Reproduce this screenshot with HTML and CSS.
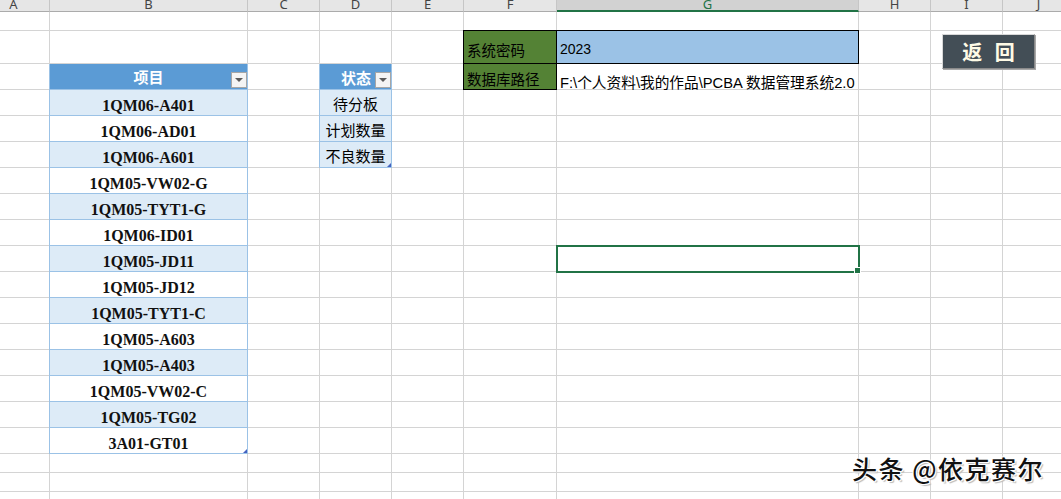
FILE: index.html
```html
<!DOCTYPE html>
<html lang="zh-CN">
<head>
    <meta charset="UTF-8">
    <title>系统设置</title>
    <link rel="stylesheet" href="styles.css">
</head>
<body>
<div class="page">
    <div class="sheet">
        <!-- column headers -->
        <div class="hd">A</div><div class="hd">B</div><div class="hd">C</div><div class="hd">D</div><div class="hd">E</div><div class="hd">F</div><div class="hd on">G</div><div class="hd">H</div><div class="hd">I</div><div class="hd">J</div>
        <!-- row 1 -->
        <div></div><div></div><div></div><div></div><div></div><div></div><div></div><div></div><div></div><div></div>
        <!-- row 2 -->
        <div></div><div></div><div></div><div></div><div></div><div class="lbl first">系统密码</div><div class="pw">2023</div><div></div><div></div><div></div>
        <!-- row 3 -->
        <div></div><div class="th mid">项目<span class="dd"></span></div><div></div><div class="th right">状态<span class="dd"></span></div><div></div><div class="lbl">数据库路径</div><div class="path">F:\个人资料\我的作品\PCBA 数据管理系统2.0</div><div></div><div></div><div></div>
        <!-- rows 4-6 -->
        <div></div><div class="it alt">1QM06-A401</div><div></div><div class="st">待分板</div><div></div><div></div><div></div><div></div><div></div><div></div>
        <div></div><div class="it">1QM06-AD01</div><div></div><div class="st">计划数量</div><div></div><div></div><div></div><div></div><div></div><div></div>
        <div></div><div class="it alt">1QM06-A601</div><div></div><div class="st end">不良数量</div><div></div><div></div><div></div><div></div><div></div><div></div>
        <!-- rows 7-17 -->
        <div></div><div class="it">1QM05-VW02-G</div><div></div><div></div><div></div><div></div><div></div><div></div><div></div><div></div>
        <div></div><div class="it alt">1QM05-TYT1-G</div><div></div><div></div><div></div><div></div><div></div><div></div><div></div><div></div>
        <div></div><div class="it">1QM06-ID01</div><div></div><div></div><div></div><div></div><div></div><div></div><div></div><div></div>
        <div></div><div class="it alt">1QM05-JD11</div><div></div><div></div><div></div><div></div><div class="sel"></div><div></div><div></div><div></div>
        <div></div><div class="it">1QM05-JD12</div><div></div><div></div><div></div><div></div><div></div><div></div><div></div><div></div>
        <div></div><div class="it alt">1QM05-TYT1-C</div><div></div><div></div><div></div><div></div><div></div><div></div><div></div><div></div>
        <div></div><div class="it">1QM05-A603</div><div></div><div></div><div></div><div></div><div></div><div></div><div></div><div></div>
        <div></div><div class="it alt">1QM05-A403</div><div></div><div></div><div></div><div></div><div></div><div></div><div></div><div></div>
        <div></div><div class="it">1QM05-VW02-C</div><div></div><div></div><div></div><div></div><div></div><div></div><div></div><div></div>
        <div></div><div class="it alt">1QM05-TG02</div><div></div><div></div><div></div><div></div><div></div><div></div><div></div><div></div>
        <div></div><div class="it end">3A01-GT01</div><div></div><div></div><div></div><div></div><div></div><div></div><div></div><div></div>
        <!-- rows 18-21 -->
        <div></div><div></div><div></div><div></div><div></div><div></div><div></div><div></div><div></div><div></div>
        <div></div><div></div><div></div><div></div><div></div><div></div><div></div><div></div><div></div><div></div>
        <div></div><div></div><div></div><div></div><div></div><div></div><div></div><div></div><div></div><div></div>
        <div></div><div></div><div></div><div></div><div></div><div></div><div></div><div></div><div></div><div></div>
    </div>

    <button class="btn">返 回</button>
    <div class="wm">头条 @依克赛尔</div>
</div>
</body>
</html>
```
FILE: styles.css
```css
body {
    margin: 0;
    background: #fff;
    overflow: hidden;
    font-family: "Liberation Sans", "Noto Sans CJK SC", sans-serif;
}

.page {
    position: relative;
    width: 1061px;
    height: 499px;
    overflow: hidden;
}

.sheet {
    display: grid;
    grid-template-columns: 72px 198px 72px 72px 72px 93px 302px 72px 72px 72px;
    grid-template-rows: 12px 19px 33px repeat(15, 26px) repeat(4, 19px);
    margin-left: -22px;
}

.sheet > div {
    box-sizing: border-box;
    border-right: 1px solid #d4d4d4;
    border-bottom: 1px solid #d4d4d4;
    display: flex;
    align-items: center;
    white-space: nowrap;
    font-size: 14.5px;
    color: #000;
}

/* column letters */
.sheet > .hd {
    background: #e6e6e6;
    border-right-color: #c6c6c6;
    border-bottom-color: #ababab;
    justify-content: center;
    align-items: flex-start;
    overflow: hidden;
    font: 13px/9px "Noto Sans", sans-serif;
    color: #444;
}

.sheet > .hd.on {
    background: #d2d2d2;
    border-bottom: 2px solid #217346;
    color: #217346;
}

/* settings block */
.sheet > .lbl {
    background: #548235;
    border-color: #000;
    box-shadow: -1px 0 0 #000;
    padding: 4px 0 0 3px;
    font-family: "Noto Sans CJK SC", sans-serif;
}

.sheet > .lbl.first {
    box-shadow: -1px 0 0 #000, 0 -1px 0 #000, -1px -1px 0 #000;
}

.sheet > .pw {
    background: #9bc2e6;
    border-color: #000;
    box-shadow: 0 -1px 0 #000;
    padding: 4px 0 0 3px;
    font-size: 14px;
}

.sheet > .path {
    padding: 10px 0 0 3px;
    font-size: 14.7px;
}

/* tables */
.sheet > .th {
    position: relative;
    background: #5b9bd5;
    border-color: #9bc2e6;
    box-shadow: -1px 0 0 #9bc2e6;
    color: #fff;
    font: bold 15px "Noto Sans CJK SC", sans-serif;
}

.sheet > .th.mid {
    justify-content: center;
}

.sheet > .th.right {
    justify-content: flex-end;
    padding: 2px 20px 0 0;
}

.dd {
    position: absolute;
    right: 0;
    bottom: 1px;
    width: 16px;
    height: 16px;
    box-sizing: border-box;
    background: #f4f4f4;
    border: 1px solid #a6a6a6;
}

.dd::after {
    content: "";
    position: absolute;
    left: 3px;
    top: 5px;
    border-left: 4px solid transparent;
    border-right: 4px solid transparent;
    border-top: 4px solid #5a5a5a;
}

.sheet > .it {
    justify-content: center;
    align-items: flex-end;
    border-color: #9bc2e6;
    box-shadow: -1px 0 0 #9bc2e6;
    font: bold 16px/18px "Liberation Serif", serif;
    color: #111;
}

.sheet > .alt {
    background: #ddebf7;
}

.sheet > .st {
    justify-content: center;
    padding-top: 2px;
    background: #ddebf7;
    border-color: #9bc2e6;
    box-shadow: -1px 0 0 #9bc2e6;
    font: 15px "Noto Sans CJK SC", sans-serif;
}

.sheet > .end {
    position: relative;
}

.sheet > .end::after {
    content: "";
    position: absolute;
    right: 0;
    bottom: 0;
    border-left: 4px solid transparent;
    border-bottom: 4px solid #4462c0;
}

/* active cell */
.sheet > .sel {
    position: relative;
    z-index: 2;
    outline: 2px solid #217346;
    outline-offset: -1px;
}

.sel::after {
    content: "";
    position: absolute;
    right: -3px;
    bottom: -3px;
    width: 5px;
    height: 5px;
    background: #217346;
    border: 1px solid #fff;
}

.btn {
    position: absolute;
    left: 942px;
    top: 34px;
    width: 93px;
    height: 35px;
    box-sizing: border-box;
    margin: 0;
    padding: 0 0 0 4px;
    background: #434e56;
    border: 1px solid;
    border-color: #d8d8d8 #8a8a8a #8a8a8a #d8d8d8;
    box-shadow: 1px 1px 0 #a8a8a8;
    color: #fffbe6;
    font: bold 20px "Noto Sans CJK SC", sans-serif;
    letter-spacing: 4px;
}

.wm {
    position: absolute;
    left: 852px;
    top: 453px;
    font: 500 25px/30px "Noto Sans CJK SC", sans-serif;
    letter-spacing: 1.5px;
    color: #111;
    text-shadow: 1px 1px 0 #fff, -1px -1px 0 #fff, 1px -1px 0 #fff, -1px 1px 0 #fff, 2px 2px 1px #bbb;
}
```
